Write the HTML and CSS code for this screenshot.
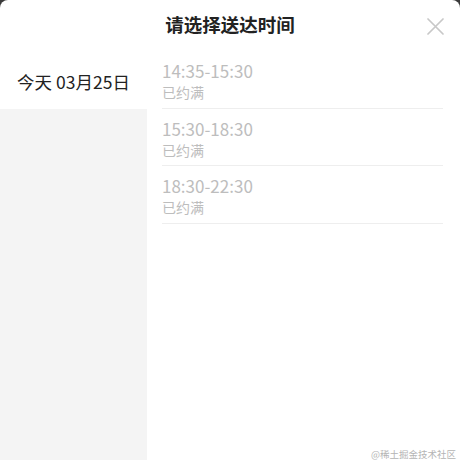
FILE: index.html
```html
<!DOCTYPE html>
<html lang="zh-CN">
<head>
<meta charset="utf-8">
<link rel="stylesheet" href="styles.css">
</head>
<body>
<div class="sheet">
  <header class="header">
    <h1 class="title">请选择送达时间</h1>
    <button class="close" aria-label="关闭">
      <svg width="17" height="17" viewBox="0 0 17 17"><path d="M1 1L16 16M16 1L1 16" stroke="#c8c8c8" stroke-width="1.7" stroke-linecap="round"/></svg>
    </button>
  </header>
  <div class="body">
    <aside class="days">
      <div class="day active">今天 03月25日</div>
      <div class="day-rest"></div>
    </aside>
    <ul class="slots">
      <li class="slot"><div class="time">14:35-15:30</div><div class="state">已约满</div></li>
      <li class="slot"><div class="time">15:30-18:30</div><div class="state">已约满</div></li>
      <li class="slot"><div class="time">18:30-22:30</div><div class="state">已约满</div></li>
    </ul>
  </div>
  <div class="watermark">@稀土掘金技术社区</div>
</div>
</body>
</html>
```

FILE: styles.css
```css
html, body {
  margin: 0;
  padding: 0;
  height: 100%;
  background: #3a3a3a;
}
body {
  font-family: "Noto Sans CJK SC", "Noto Sans", sans-serif;
}
.sheet {
  position: relative;
  height: 460px;
  background: #fff;
  border-radius: 8px 8px 0 0;
  display: flex;
  flex-direction: column;
  overflow: hidden;
}
.header {
  height: 51px;
  display: flex;
  align-items: center;
  justify-content: center;
  position: relative;
}
.title {
  margin: 0;
  font-size: 18.5px;
  font-weight: 700;
  color: #222;
  line-height: 1;
  margin-top: -2px;
}
.close {
  position: absolute;
  right: 16px;
  top: 18px;
  border: 0;
  padding: 0;
  background: none;
  width: 17px;
  height: 17px;
}
.close svg { display: block; }
.body {
  flex: 1;
  display: flex;
}
.days {
  width: 147px;
  display: flex;
  flex-direction: column;
}
.day {
  height: 58px;
  box-sizing: border-box;
  padding-top: 3px;
  display: flex;
  align-items: center;
  justify-content: center;
  font-size: 17.5px;
  color: #222;
}
.day-rest {
  flex: 1;
  background: #f4f4f4;
}
.slots {
  list-style: none;
  margin: 0;
  padding: 0 17px 0 15px;
  flex: 1;
}
.slot {
  height: 57.5px;
  box-sizing: border-box;
  border-bottom: 1px solid #eeeeee;
  padding-top: 8px;
}
.time {
  font-size: 17px;
  color: #bdbdbd;
  line-height: 24px;
}
.state {
  font-size: 14px;
  color: #bdbdbd;
  line-height: 18px;
}
.watermark {
  position: absolute;
  right: 4px;
  bottom: 0;
  font-size: 9.5px;
  line-height: 12px;
  color: #b4b4b4;
}
```
